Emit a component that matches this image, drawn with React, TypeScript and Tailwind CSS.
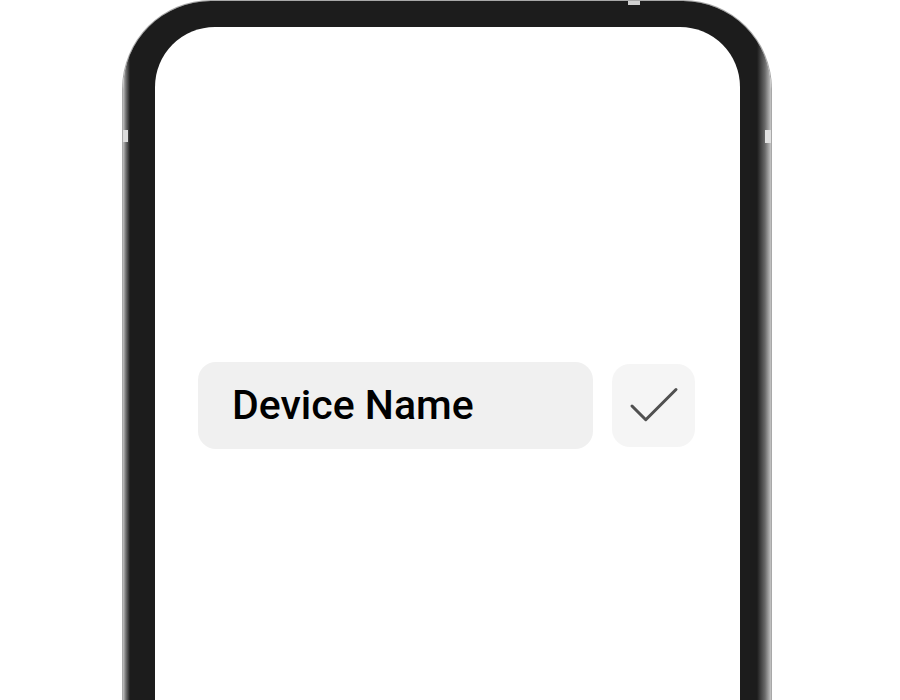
import { Check } from 'lucide-react'

export default function App() {
  return (
    <div
      className="relative h-[700px] w-[900px] overflow-hidden bg-white"
      style={{ fontFamily: 'Roboto, "Noto Sans", sans-serif' }}
    >
      <div className="pl-[123px] pt-px">
        {/* phone frame: shaded rim, dark bezel, white screen */}
        <div className="relative h-[820px] w-[648px] rounded-[88px] bg-[linear-gradient(90deg,#c2c2c2_0px,#707070_3px,#1c1c1c_7px,#1c1c1c_calc(100%-14px),#6a6a6a_calc(100%-6px),#c6c6c6_100%)] pt-[26px] pl-[32px] pr-[31px] shadow-[0_0_0_1px_#a8a8a8]">
          <div className="absolute left-0 top-[129px] h-[12px] w-[5px] bg-[#dcdcdc]" />
          <div className="absolute right-0 top-[129px] h-[13px] w-[6px] bg-[#e0e0e0]" />
          <div className="absolute left-[505px] top-0 h-[4px] w-[12px] bg-[#cfcfcf]" />

          <div className="h-[900px] rounded-[60px] bg-white pt-[335px] pl-[43px]">
            <div className="flex items-center gap-[19px]">
              <div className="flex h-[87px] w-[395px] items-center rounded-[18px] bg-[#f0f0f0] pl-[34px]">
                <span className="text-[41px] font-medium text-black">Device Name</span>
              </div>
              <button className="flex h-[83px] w-[83px] items-center justify-center rounded-[18px] bg-[#f5f5f5]">
                <Check size={66} strokeWidth={1.1} color="#505050" />
              </button>
            </div>
          </div>
        </div>
      </div>
    </div>
  )
}
